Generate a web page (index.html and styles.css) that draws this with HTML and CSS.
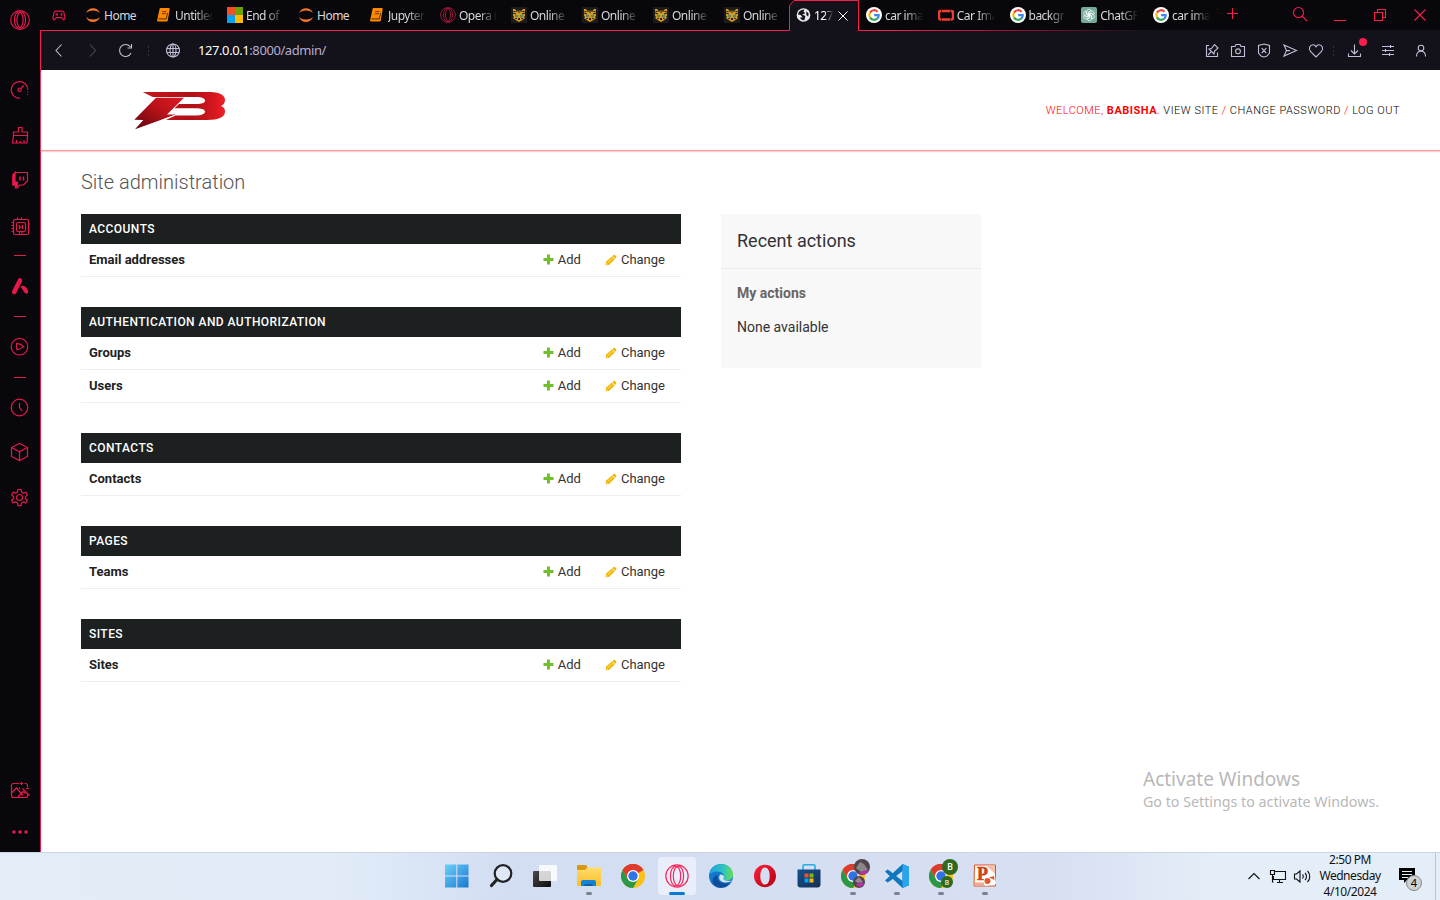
FILE: index.html
```html
<!DOCTYPE html>
<html lang="en">
<head>
<meta charset="utf-8">
<title>Site administration</title>
<link rel="stylesheet" href="styles.css">
</head>
<body>
<svg class="defs" aria-hidden="true">
  <defs>
    <linearGradient id="g-win" x1="0" y1="0" x2="1" y2="1"><stop offset="0" stop-color="#6bd0fb"/><stop offset="1" stop-color="#1b78cf"/></linearGradient>
    <linearGradient id="g-folder" x1="0" y1="0" x2="0" y2="1"><stop offset="0" stop-color="#ffdc6a"/><stop offset="1" stop-color="#f9bf28"/></linearGradient>
    <linearGradient id="g-edge" x1="0" y1="0" x2="1" y2="0"><stop offset="0" stop-color="#1fa0dd"/><stop offset=".6" stop-color="#2fc4c0"/><stop offset="1" stop-color="#6ae04a"/></linearGradient>
    <linearGradient id="g-opera" x1="0" y1="0" x2="1" y2="1"><stop offset="0" stop-color="#ff2038"/><stop offset="1" stop-color="#b00014"/></linearGradient>
    <linearGradient id="g-store" x1="0" y1="0" x2="1" y2="1"><stop offset="0" stop-color="#14508f"/><stop offset="1" stop-color="#182f54"/></linearGradient>
    <linearGradient id="g-task" x1="0" y1="0" x2="1" y2="1"><stop offset="0" stop-color="#4a4a4a"/><stop offset="1" stop-color="#0c0c0c"/></linearGradient>
    <linearGradient id="g-bolt" x1="1" y1="0" x2="0" y2="1"><stop offset="0" stop-color="#e01a23"/><stop offset=".45" stop-color="#b81219"/><stop offset="1" stop-color="#5d050b"/></linearGradient>
    <linearGradient id="g-b" x1="0" y1="0" x2="1" y2="0"><stop offset="0" stop-color="#c9151d"/><stop offset=".6" stop-color="#b01017"/><stop offset=".85" stop-color="#d3161e"/><stop offset="1" stop-color="#f01e27"/></linearGradient>
  </defs>
  <symbol id="jupyter" viewBox="0 0 16 16"><path d="M1 6.200C2.400 2.900 4.900 1.200 8 1.200s5.600 1.700 7 5C13.200 4.500 10.900 3.600 8 3.600S2.800 4.500 1 6.200zM1 9.900c1.800 1.700 4.100 2.500 7 2.500s5.200-.8 7-2.500c-1.400 3.300-3.900 5-7 5s-5.600-1.700-7-5z" fill="#f37726"/></symbol>
  <symbol id="book" viewBox="0 0 16 16"><path d="M4.500 2h8.300L10.800 13.500H2z" fill="#ff8800" stroke="#ff8800" stroke-width="1.800" stroke-linejoin="round"/><path d="M2.500 11.900h7.800l1.300-6" stroke="#2b1600" stroke-width=".8" fill="none"/><path d="M6.200 4.600h4.200M5.800 6.700h4.200" stroke="#5e3000" stroke-width=".9" fill="none"/></symbol>
  <symbol id="ms" viewBox="0 0 16 16"><path d="M0 0h8v8H0z" fill="#f25022"/><path d="M8 0h8v8H8z" fill="#6aa300"/><path d="M0 8h8v8H0z" fill="#00a4ef"/><path d="M8 8h8v8H8z" fill="#ffb900"/></symbol>
  <symbol id="gx" viewBox="0 0 20 20"><g fill="none" stroke="currentColor"><circle cx="10" cy="10" r="9.300"/><ellipse cx="8.800" cy="10" rx="4.300" ry="8.200"/><ellipse cx="11.200" cy="10" rx="4.300" ry="8.200"/></g></symbol>
  <symbol id="tiger" viewBox="0 0 16 16"><path d="M0 0h16v16H0z" fill="#1b1c19"/><path d="M2 2h2l1 1.500h6L12 2h2v6.500l-1 1.500 1 1-2.500 2L8 15l-3.500-2L2 11l1-1-1-1.500z" fill="#d59a22"/><path d="M6 1v4M8 1v5M10 1v4M2 6l3 1M14 6l-3 1M4 12l2-1M12 12l-2-1M2.500 4.500h2M13.500 4.500h-2" stroke="#1b1c19"/><path d="M4 8h3v2H4zM9 8h3v2H9z" fill="#4b8a88"/><path d="M7 11h2v2H7z" fill="#40200c"/></symbol>
  <symbol id="world" viewBox="0 0 16 16"><circle cx="8" cy="8" r="7.300" fill="#e9eaed"/><path d="M2.600 5.500C4 3 7 2 9 2.200L8 4.500l2 1.500-3.500 1.500 3.500 1.600-1 4.400c-2.500.2-4-1-4.800-2.500L7 10.500 5 8 2.200 7.500zM11 4l2.500 2.500-.5 3-2-1.500z" fill="#15131b"/></symbol>
  <symbol id="google" viewBox="0 0 16 16"><circle cx="8" cy="8" r="8" fill="#fff"/><g fill="none" stroke-width="2.200"><path d="M11.500 4.700A4.700 4.700 0 0 0 4 5.600" stroke="#ea4335"/><path d="M4 5.600a4.700 4.700 0 0 0 0 4.800" stroke="#fbbc05"/><path d="M4 10.400a4.700 4.700 0 0 0 7.200 1.200" stroke="#34a853"/><path d="M11.200 11.600A4.700 4.700 0 0 0 12.700 8.200H8.100" stroke="#4285f4"/></g></symbol>
  <symbol id="carimg" viewBox="0 0 16 16"><rect x="1" y="4" width="14" height="8.500" rx="1.500" fill="none" stroke="#ef3e2e" stroke-width="2.400"/><path d="M3.500 3v2.500M12.500 3v2.500M3.500 11.500V14M12.500 11.500V14" fill="none" stroke="#6d1712" stroke-width="1"/></symbol>
  <symbol id="gpt" viewBox="0 0 16 16"><rect width="16" height="16" rx="2" fill="#74aa9c"/><g fill="none" stroke="#fff" stroke-width=".7"><path id="petal" d="M8 8.900L5.600 7.500V4.600a2.300 2.300 0 0 1 4.400-.9L7.200 5.300v3"/><use href="#petal" transform="rotate(60 8 8)"/><use href="#petal" transform="rotate(120 8 8)"/><use href="#petal" transform="rotate(180 8 8)"/><use href="#petal" transform="rotate(240 8 8)"/><use href="#petal" transform="rotate(300 8 8)"/></g></symbol>
  <symbol id="plus" viewBox="0 0 11 11"><path d="M4 .5h3V4h3.500v3H7v3.500H4V7H.5V4H4z" fill="#70bf2b"/></symbol>
  <symbol id="pencil" viewBox="0 0 12 12"><path d="M.6 11.200L1.200 7.600l5.600-5.100 2.800 3L4 10.900z" fill="#efb80b"/><path d="M7.300 2.200L8.600 1c.5-.4 1-.4 1.400 0l1.200 1.200c.4.400.4.900 0 1.300L10 4.900z" fill="#efb80b"/><path d="M2.900 8.500L7.400 4.300" stroke="#fff3b8" stroke-width=".6"/><path d="M2 9.200l1 1-1.300.4z" fill="#fff"/></symbol>
  <symbol id="chrome" viewBox="0 0 24 24"><circle cx="12" cy="12" r="12" fill="#fbc116"/><path d="M12 12L1.600 6A12 12 0 0 1 22.400 6z" fill="#dd3b2e"/><path d="M12 6h10.400A12 12 0 0 0 1.600 6l5.200 9z" fill="#dd3b2e"/><path d="M17.200 15L12 24A12 12 0 0 1 1.600 6l5.200 9 5.200 3z" fill="#2a9847"/><circle cx="12" cy="12" r="6" fill="#fff"/><circle cx="12" cy="12" r="4.700" fill="#2f73e8"/></symbol>
</svg>

<div class="screen">
  <div class="browser">
    <nav class="rail">
      <svg class="ri" viewBox="0 0 20 20"><use href="#gx"/></svg>
      <svg class="ri m50" viewBox="0 0 20 20"><path d="M17.800 9.500a8.300 8.300 0 1 0-7.800 8.700"/><path d="M17.800 11.500v1M17.500 14v.8" /><circle cx="9.500" cy="9.800" r="1.600"/><path d="M10.700 8.600l3-3.100"/></svg>
      <svg class="ri m25" viewBox="0 0 20 20"><path d="M3.500 10.500V7h5V2.500h3.500V7h5.500v3.500zM3.500 10.500l-1 7.500h14.500l.5-7.500M6.500 18v-3M10.500 18v-2M14 18v-3"/></svg>
      <svg class="ri m25" viewBox="0 0 20 20"><path d="M5 2.500h12.500v8.500l-4 4h-3.500l-3 3v-3H3V5z"/><path d="M3 5l2-2.500V12h2.500v3l-2 2.500V15H3z" fill="currentColor"/><path d="M10 6.500v4M13.500 6.500v4" stroke-width="1.500"/></svg>
      <svg class="ri m26" viewBox="0 0 20 20"><rect x="3.500" y="3.500" width="15" height="15" rx="1.500"/><rect x="6.500" y="6.500" width="9" height="9" rx="1.500"/><path d="M9.500 9v4M12.500 9v4M9.500 11h3M7.500 3.500v-2M11.500 3.500v-2M9.500 16v2.500M12 16v2.500M1.500 6.500h2M1.500 9.500h2M1.500 12.500h2M1.500 15.500h2M18.500 8h1.500M18.500 14h1.500"/></svg>
      <i class="dash m19"></i>
      <svg class="ri m21" viewBox="0 0 20 20"><path d="M10 3.500L4.200 15" stroke-width="4.600" stroke-linecap="round"/><path d="M12.300 8.800c4 .4 6.200 4 5.800 6.700-.2 1.200-1.800 1.500-2.900.8-1.700-1.300-2.300-3.900-4.200-5.700-.8-.9 0-2 1.300-1.800z" fill="currentColor" stroke="none"/></svg>
      <i class="dash m19"></i>
      <svg class="ri m20" viewBox="0 0 20 20"><circle cx="9.500" cy="9.700" r="8.300"/><path d="M6.700 6.400c3 .3 5.300 1.300 7.100 3.200-2 1.800-4.200 2.700-6.800 3.100-.7-2-.8-4.200-.3-6.300z"/></svg>
      <i class="dash m20"></i>
      <svg class="ri m20" viewBox="0 0 20 20"><circle cx="9.500" cy="9.500" r="8.300"/><path d="M9.500 5v4.500l2.700 3.500"/></svg>
      <svg class="ri m24" viewBox="0 0 20 20"><path d="M9.500 1.500l8 4v9l-8 4-8-4v-9zM1.500 5.500l8 4.300 8-4.300M9.500 9.800v8.700"/></svg>
      <svg class="ri m25" viewBox="0 0 20 20"><circle cx="9.500" cy="10.500" r="3"/><path d="M8 2.500h3l.6 2.600 1.700 1 2.500-.9 1.600 2.700-2 1.800v1.700l2 1.800-1.600 2.700-2.500-.9-1.700 1-.6 2.600H8L7.400 16l-1.700-1-2.500.9-1.600-2.700 2-1.800V9.700l-2-1.800 1.600-2.700 2.500.9 1.700-1z"/></svg>
      <svg class="ri mauto" viewBox="0 0 20 20"><path d="M9 3.500H3.500a2 2 0 0 0-2 2v10a2 2 0 0 0 2 2h12a2 2 0 0 0 2-2v-1M17.500 7.500V5.500a2 2 0 0 0-2-2H14.500M1.500 13l5-5 6.500 7.500M8 17l5-5.500 2.500 2M12.500 8.500l7 7M11.500 2v3M10 3.500h3M16 8.500h3M9.500 7.500v1.500"/></svg>
      <svg class="ri m22" viewBox="0 0 20 20"><g fill="currentColor" stroke="none"><circle cx="4" cy="10" r="1.800"/><circle cx="10" cy="10" r="1.800"/><circle cx="16" cy="10" r="1.800"/></g></svg>
    </nav>
    <div class="window">
      <div class="tabs">
        <svg class="pad" viewBox="0 0 16 12"><path d="M4 1h8l1.500 1L15 9.500 13.500 11 11 8.500H5L2.500 11 1 9.500 2.500 2z"/><path d="M4 4.800h3M5.500 3.300v3M10 3.500l1.800 2.500M11.800 3.500L10 6"/></svg>
        <div class="tab"><svg><use href="#jupyter"/></svg><span>Home</span></div>
        <div class="tab"><svg><use href="#book"/></svg><span class="fade">Untitlec</span></div>
        <div class="tab"><svg><use href="#ms"/></svg><span class="fade">End of</span></div>
        <div class="tab"><svg><use href="#jupyter"/></svg><span>Home</span></div>
        <div class="tab"><svg><use href="#book"/></svg><span class="fade">Jupyter</span></div>
        <div class="tab"><svg class="rose"><use href="#gx"/></svg><span class="fade">Opera (</span></div>
        <div class="tab"><svg><use href="#tiger"/></svg><span class="fade">Online</span></div>
        <div class="tab"><svg><use href="#tiger"/></svg><span class="fade">Online</span></div>
        <div class="tab"><svg><use href="#tiger"/></svg><span class="fade">Online</span></div>
        <div class="tab"><svg><use href="#tiger"/></svg><span class="fade">Online</span></div>
        <div class="tab active">
          <svg class="shape" viewBox="0 0 72 32"><path d="M0 30.500h1.500V5.500L6 .5h64.500v30H72V32H0z" fill="#13111a" stroke="none"/><path d="M0 30.500h1.500V5.500L6 .5h64.500v30H72"/></svg>
          <svg class="fav"><use href="#world"/></svg><span class="fade">127</span>
          <svg class="close" viewBox="0 0 10 10"><path d="M.5.5l9 9M9.500.5l-9 9"/></svg>
        </div>
        <div class="tab late"><svg><use href="#google"/></svg><span class="fade">car ima</span></div>
        <div class="tab late"><svg><use href="#carimg"/></svg><span class="fade">Car Ima</span></div>
        <div class="tab late"><svg><use href="#google"/></svg><span class="fade">backgr</span></div>
        <div class="tab late"><svg><use href="#gpt"/></svg><span class="fade">ChatGP</span></div>
        <div class="tab late"><svg><use href="#google"/></svg><span class="fade">car ima</span></div>
        <svg class="new" viewBox="0 0 12 12"><path d="M5.500 0v11M0 5.500h11"/></svg>
        <div class="winctl">
          <svg viewBox="0 0 16 16"><circle cx="6.500" cy="5.500" r="5"/><path d="M10 9l5 5"/></svg>
          <svg viewBox="0 0 16 16"><path d="M2 13.500h12"/></svg>
          <svg viewBox="0 0 16 16"><path d="M2.500 5.500h8v8h-8zM5.500 5V2.500h8v8H11"/></svg>
          <svg viewBox="0 0 16 16"><path d="M2.500 2.500l11 11M13.500 2.500l-11 11"/></svg>
        </div>
      </div>
      <div class="bar">
        <svg class="b1" viewBox="0 0 16 16"><path d="M10.500 1.500L5 7.500l5.500 6"/></svg>
        <svg class="b2 dim" viewBox="0 0 16 16"><path d="M5 1.500l5.500 6-5.500 6"/></svg>
        <svg class="b3" viewBox="0 0 16 16"><path d="M13 10A6 6 0 1 1 12.500 4M13.500 1v4h-4"/></svg>
        <i class="dots"></i>
        <svg class="b4" viewBox="0 0 16 16"><circle cx="8" cy="7.500" r="6.500"/><ellipse cx="8" cy="7.500" rx="3" ry="6.500"/><path d="M2 5.500h12M2 9.500h12M8 1v13"/></svg>
        <span class="url"><b>127.0.0.1</b>:8000/admin/</span>
        <div class="tools">
          <svg viewBox="0 0 16 16"><path d="M5 2.500H2.500v11h11V9.500M4 12l3.300-3.300M5 6l5 5 .5-2.700 3.500-3.300-3.500-3.500L7.500 5.500z"/></svg>
          <svg viewBox="0 0 16 16"><path d="M1.500 3.500H5L6 1.500h4l1 2h3.500v10h-13z"/><circle cx="8" cy="8.300" r="2.400"/></svg>
          <svg viewBox="0 0 16 16"><path d="M8 1l5.500 1.500V10L11 13l-3 1-3-1-2.500-3V2.500zM5.700 5.200l4.600 4.800M10.300 5.200l-4.600 4.800"/></svg>
          <svg viewBox="0 0 16 16"><path d="M2 2l12.500 5.600L2 13.100l2.500-5.500zM4.500 7.600H8"/></svg>
          <svg viewBox="0 0 16 16"><path d="M8 14L2.500 8.500C0 5.500 2 1.700 5 1.700c1.500 0 2.500 1 3 2 .5-1 1.500-2 3-2 3 0 5 3.800 2.500 6.800z"/></svg>
          <i class="dots"></i>
          <svg class="dl" viewBox="0 0 16 16"><path d="M8.500 1.500v9M5 7.500L8.500 11 12 7.500M2.500 10.500v3h12v-3"/></svg>
          <svg class="sl" viewBox="0 0 16 16"><path d="M2 3.500h12M2 7.500h12M2 11.500h12M10.500 2v3M5.500 6v3M9.500 10v3"/></svg>
          <svg class="us" viewBox="0 0 16 16"><circle cx="8" cy="5" r="2.800"/><path d="M3.500 13.500c0-3.500 1.700-5.200 4.500-5.200s4.500 1.700 4.500 5.200"/></svg>
          <i class="alert"></i>
        </div>
      </div>
      <div class="page">
        <header class="head">
          <svg class="logo" viewBox="0 0 94 40">
            <path fill-rule="evenodd" d="M9.700 2H77C88 2 92 6 92 10c0 3-1.500 5-4 6 3 1 4 3 4 5.500C92 27 86 30 74 30H33l9-4.500h20c6 0 10-1.500 10-3.800s-4-3.400-9-3.400H41.500L46 14h17.500c5 0 8.500-1.200 8.500-3.300S69 7 63 7H19.700z" fill="url(#g-b)"/>
            <path d="M23 7.700h28L36 22.500 34 24.500h9L2 39.300 10.300 30l-9-.3z" fill="url(#g-bolt)"/>
            <path d="M42 25.200L25 31.800" stroke="#fff" stroke-width=".9"/>
          </svg>
          <div class="user">WELCOME, <b>BABISHA</b>. <a>VIEW SITE</a> / <a>CHANGE PASSWORD</a> / <a>LOG OUT</a></div>
        </header>
        <main>
          <h1>Site administration</h1>
          <div class="cols">
            <div class="modules">
              <section><h2>ACCOUNTS</h2>
                <div class="row"><b>Email addresses</b><a><svg class="pl"><use href="#plus"/></svg>Add</a><a class="ch"><svg class="pe"><use href="#pencil"/></svg>Change</a></div></section>
              <section><h2>AUTHENTICATION AND AUTHORIZATION</h2>
                <div class="row"><b>Groups</b><a><svg class="pl"><use href="#plus"/></svg>Add</a><a class="ch"><svg class="pe"><use href="#pencil"/></svg>Change</a></div>
                <div class="row"><b>Users</b><a><svg class="pl"><use href="#plus"/></svg>Add</a><a class="ch"><svg class="pe"><use href="#pencil"/></svg>Change</a></div></section>
              <section><h2>CONTACTS</h2>
                <div class="row"><b>Contacts</b><a><svg class="pl"><use href="#plus"/></svg>Add</a><a class="ch"><svg class="pe"><use href="#pencil"/></svg>Change</a></div></section>
              <section><h2>PAGES</h2>
                <div class="row"><b>Teams</b><a><svg class="pl"><use href="#plus"/></svg>Add</a><a class="ch"><svg class="pe"><use href="#pencil"/></svg>Change</a></div></section>
              <section><h2>SITES</h2>
                <div class="row"><b>Sites</b><a><svg class="pl"><use href="#plus"/></svg>Add</a><a class="ch"><svg class="pe"><use href="#pencil"/></svg>Change</a></div></section>
            </div>
            <aside class="recent">
              <h2>Recent actions</h2>
              <h3>My actions</h3>
              <p>None available</p>
            </aside>
          </div>
        </main>
        <div class="activate"><div class="a1">Activate Windows</div><div class="a2">Go to Settings to activate Windows.</div></div>
      </div>
    </div>
  </div>
  <footer class="taskbar">
    <div class="apps">
      <div class="app"><svg viewBox="0 0 24 24"><path d="M0 .5h11.300v11H0zM12.300.5h11.200v11H12.300zM0 12.500h11.300v11H0zM12.300 12.500h11.200v11H12.300z" fill="url(#g-win)"/></svg></div>
      <div class="app"><svg viewBox="0 0 24 24"><circle cx="14" cy="9.500" r="8.300" fill="#e8eefa" fill-opacity=".6" stroke="#222" stroke-width="2.200"/><path d="M8 15.500l-5.500 6" stroke="#222" stroke-width="3.200" stroke-linecap="round"/></svg></div>
      <div class="app"><svg viewBox="0 0 24 24"><rect y="7" width="18" height="16" rx="1" fill="url(#g-task)"/><rect x="6" y="1" width="18" height="16" rx="1" fill="#fff" fill-opacity=".8"/></svg></div>
      <div class="app run"><svg viewBox="0 0 24 24"><path d="M0 2a1 1 0 0 1 1-1h8l2 3-2 3H0z" fill="#d9980e"/><path d="M0 6h8l2.500-2.500H23a1 1 0 0 1 1 1V21a1 1 0 0 1-1 1H1a1 1 0 0 1-1-1z" fill="url(#g-folder)"/><path d="M4 22v-4a2 2 0 0 1 2-2h11a2 2 0 0 1 2 2v4z" fill="#1583d3"/><path d="M7.500 22v-2h8v2z" fill="#0b5fa5"/></svg></div>
      <div class="app"><svg><use href="#chrome"/></svg></div>
      <div class="app current"><svg class="gxb"><use href="#gx"/></svg></div>
      <div class="app"><svg viewBox="0 0 24 24"><circle cx="12" cy="12" r="12" fill="#1478cd"/><path d="M.5 10C1.500 4 6.500 0 12 0c7 0 12 5 12 10.500 0 4-3 6-6.500 6-2.500 0-3.500-1-3-2 1-1 1-5-3-6.500C7 6.500 2 8 .5 11z" fill="url(#g-edge)"/><path d="M8.500 11c-1.500 5.500 3.500 10.500 13 7.500-4 6-12 6.500-16.500 2.500-3-4-1-9 3.500-10z" fill="#104c98"/><path d="M11.500 10.500c-3 2.500-1 8 5 8 3 0 5-.7 6.500-2-4 1-9 0-8.500-2 1.500-2-.5-4-3-4z" fill="#d7e3f5"/></svg></div>
      <div class="app"><svg viewBox="0 0 24 24"><path fill-rule="evenodd" d="M12 .8c6 0 11 4.800 11 11.200s-5 11.200-11 11.200S1 18.400 1 12 6 .8 12 .8zm0 2.700C9 3.500 7.300 7 7.300 12S9 20.500 12 20.500s4.700-3.500 4.700-8.500S15 3.500 12 3.500z" fill="url(#g-opera)"/></svg></div>
      <div class="app"><svg viewBox="0 0 24 24"><path d="M6 7V2c0-.7.500-1.200 1.200-1.200h9.600c.7 0 1.200.5 1.200 1.200V7" fill="none" stroke="#25aee6" stroke-width="1.600"/><path d="M.5 5.500h23v15a3 3 0 0 1-3 3h-17a3 3 0 0 1-3-3z" fill="url(#g-store)"/><path d="M7.500 9.500h4v4h-4z" fill="#f25022"/><path d="M12.500 9.500h4v4h-4z" fill="#7fba00"/><path d="M7.500 14.500h4v4h-4z" fill="#00a4ef"/><path d="M12.500 14.500h4v4h-4z" fill="#ffb900"/></svg></div>
      <div class="app run"><svg viewBox="0 0 24 24"><use href="#chrome" width="24" height="24"/></svg><svg class="av" viewBox="0 0 30 30"><circle cx="21" cy="8" r="8" fill="#4e464b"/><path d="M15 9l4-6 4 2 4 6-7 2z" fill="#8d8688"/><path d="M17 14l8-3 2 2-4 3z" fill="#b531ae"/><circle cx="18" cy="23" r="6" fill="#4e464b"/><path d="M14 22l4-4 4 5-5 1z" fill="#99898f"/><path d="M14 26l7-3 2 2-3 3z" fill="#b531ae"/></svg></div>
      <div class="app run"><svg viewBox="0 0 24 24"><path d="M17.500 0L24 2.800v18.400L17.500 24 2 9.500 0 7.500 2.500 5.500 5 7l12.500 10V7L5 17l-2.500 1.500L0 16.500 17.500 0z" fill="#1177bd"/><path d="M17.500 0L24 2.800v18.400L17.500 24z" fill="#29a5ee"/></svg></div>
      <div class="app run"><svg viewBox="0 0 24 24"><use href="#chrome" width="24" height="24"/></svg><svg class="av" viewBox="0 0 30 30"><circle cx="21" cy="8" r="8" fill="#30691d"/><circle cx="18" cy="23" r="6" fill="#30691d"/><text x="21" y="11" class="t1">B</text><text x="18" y="25.500" class="t2">B</text></svg></div>
      <div class="app run"><svg class="ppt" viewBox="0 0 24 24"><path d="M1.500 1h21v21H1z" fill="#fff" stroke="#d9542c"/><path d="M13 1.500h9V10z" fill="#f6c2a8"/><path d="M2 18.500h9v3H2z" fill="#f0a98a"/><text x="9.500" y="16" class="pp">P</text><path d="M11 13l11-2 1 9-11 2z" fill="#fff"/><circle cx="14.500" cy="17" r="3" fill="#e25a2c"/><path d="M16 13.500l5-1.500.5 4z" fill="#e25a2c"/></svg></div>
    </div>
    <div class="tray">
      <svg class="caret" viewBox="0 0 14 14"><path d="M1.500 9L7 3.500 12.500 9"/></svg>
      <svg class="net" viewBox="0 0 16 14"><path d="M5 1.500h10.500v8H3.500V6M7 12.500h6M9.500 9.500v3M.5.500h4v4h-4zM2.500 4.500V12h1"/></svg>
      <svg class="vol" viewBox="0 0 18 14"><path d="M1.500 4h2L7 1v11L3.500 9h-2zM9.500 4.500c1 1 1 3 0 4M12 3c2 2 2 5 0 7M14.500 1c3 3 3 8 0 11"/></svg>
      <div class="clock">2:50 PM<br>Wednesday<br>4/10/2024</div>
      <div class="note"><svg viewBox="0 0 17 17"><path d="M0 0h16v12H8l-3 3V12H0z" fill="#000"/><path d="M3 3.500h10M3 6.500h10M3 9.500h6" stroke="#e4eef8"/></svg><span>4</span></div>
      <i class="peek"></i>
    </div>
  </footer>
</div>
</body>
</html>
```

FILE: styles.css
```css
* { box-sizing: border-box; }
body { margin: 0; font-family: Roboto, "Liberation Sans", sans-serif; overflow: hidden; }
h1, h2, h3, p { margin: 0; }
svg { flex: none; display: block; overflow: visible; }
i { display: block; }
.defs { position: absolute; width: 0; height: 0; }
.screen { width: 1440px; height: 900px; display: flex; flex-direction: column; }
.browser { height: 852px; display: flex; background: #08070c; }

/* left rail */
.rail { width: 40px; display: flex; flex-direction: column; align-items: center; padding: 10px 0; color: #e6194b; }
.ri { width: 20px; height: 20px; fill: none; stroke: currentColor; stroke-width: 1.2; }
.dash { width: 12px; height: 1px; background: #e6194b; }
.m19 { margin-top: 19px; } .m20 { margin-top: 20px; } .m21 { margin-top: 21px; } .m22 { margin-top: 22px; }
.m24 { margin-top: 24px; } .m25 { margin-top: 25px; } .m26 { margin-top: 26px; } .m50 { margin-top: 50px; }
.mauto { margin-top: auto; }

.window { width: 1400px; display: flex; flex-direction: column; }

/* tab strip */
.tabs { height: 31px; flex: none; display: flex; align-items: flex-start; padding-left: 12px; color: #d8d8da;
  font: 12px/16px "Noto Sans", sans-serif;
  background: linear-gradient(90deg, #fa1e4e 0 850px, #a91438 960px, #13111a 1110px) 0 100% / 100% 1px no-repeat; }
.pad { width: 14px; height: 11px; margin: 10px 19px 0 0; fill: none; stroke: #e6194b; stroke-width: 1.3; }
.tab { position: relative; width: 71px; flex: none; display: flex; gap: 3px; padding-top: 7px; white-space: nowrap; }
.tab.late { width: 71.750px; }
.tab > svg { width: 16px; height: 16px; }
.tab span { position: relative; width: 39px; padding-top: 1px; font-size: 12px; letter-spacing: -.5px; }
.tab .fade { -webkit-mask-image: linear-gradient(90deg, #000 50%, transparent 98%); mask-image: linear-gradient(90deg, #000 50%, transparent 98%); }
.rose { color: #c01a42; }
.tab.active { width: 71px; padding-left: 1px; }
.tab .shape { position: absolute; left: -7px; top: 0; width: 72px; height: 32px; fill: none; stroke: #fa1e4e; }
.tab .fav { position: relative; width: 15px; height: 16px; }
.tab.active span { width: 20px; color: #fff; }
.tab .close { position: relative; width: 10px; height: 10px; margin: 4px 0 0 1px; stroke: #fff; fill: none; }
.new { width: 12px; height: 12px; margin: 8px 0 0 2px; fill: none; stroke: #fa1e4e; }
.winctl { margin-left: auto; display: flex; gap: 24px; padding: 7px 12px 0 0; }
.winctl svg { width: 16px; height: 16px; fill: none; stroke: #fa1e4e; stroke-width: 1.1; }

/* address bar */
.bar { height: 39px; flex: none; display: flex; align-items: center; background: #13111a; border-left: 1px solid #fa1e4e; }
.bar svg { width: 16px; height: 16px; fill: none; stroke: #c4bdd8; stroke-width: 1.1; }
.bar .b1 { margin-left: 10px; }
.bar .b2 { margin-left: 18px; }
.bar .b3 { margin-left: 17px; }
.bar .b4 { margin-left: 16px; }
.bar .dim { stroke: #4a4756; }
.dots { width: 1px; height: 10px; margin-left: 14px; background: repeating-linear-gradient(#35313f 0 2px, transparent 2px 4px); }
.url { margin-left: 17px; padding-bottom: 1px; font: 13px/18px "Noto Sans", sans-serif; letter-spacing: -.42px; color: #b7aecf; }
.url b { color: #fff; font-weight: 400; }
.tools { position: relative; margin-left: auto; display: flex; align-items: center; gap: 10px; padding-right: 11px; }
.tools .dots { margin: 0 -2px 0 -1px; }
.tools .dl { margin-left: 4px; }
.tools .sl { margin-left: 8px; }
.tools .us { margin-left: 7px; }
.alert { position: absolute; right: 73px; top: -5px; width: 8px; height: 8px; border-radius: 50%; background: #fa1e4e; }

/* page */
.page { position: relative; flex: 1; background: #fff; border-left: 1px solid #e6194b; }
.head { height: 80px; display: flex; justify-content: space-between; align-items: center; padding: 0 40px 0 92px; box-shadow: 0 1px 0 #ff9c9c, 0 2px 1px #ffd0d0; }
.logo { width: 94px; height: 40px; }
.user { font-size: 11px; font-weight: 300; letter-spacing: .5px; color: #ff0000; }
.user b { font-weight: 700; }
.user a { color: #000; }
main { padding: 20px 40px; }
h1 { font-size: 20px; font-weight: 300; line-height: 24px; color: #555; margin-bottom: 20px; }
.cols { display: flex; gap: 40px; align-items: flex-start; }
.modules { width: 600px; display: flex; flex-direction: column; gap: 30px; }
.modules h2 { height: 30px; padding: 0 8px; background: #1c2021; color: #fff; font-size: 12px; line-height: 30px; font-weight: 500; letter-spacing: .44px; }
.row { height: 33px; display: flex; align-items: center; padding: 0 16px 2px 8px; border-bottom: 1px solid #eee; font-size: 13px; color: #333; }
.row b { flex: 1; color: #222; font-weight: 700; }
.row a { display: flex; align-items: center; gap: 4px; }
.row .ch { margin-left: 24px; }
.pl { width: 11px; height: 11px; }
.pe { width: 12px; height: 12px; margin-top: 1px; }
.recent { width: 260px; height: 154px; background: #f8f8f8; }
.recent h2 { height: 55px; padding: 16px; border-bottom: 1px solid #eaeaea; font-size: 18px; line-height: 22px; font-weight: 400; color: #333; }
.recent h3 { margin: 16px 16px 0; font-size: 14px; line-height: 17px; color: #666; }
.recent p { margin: 17px 16px 0; font-size: 14px; line-height: 17px; color: #333; }
.activate { position: absolute; left: 1102px; top: 696px; color: #b8b8b8; font-family: "Noto Sans", sans-serif; white-space: nowrap; }
.a1 { font-size: 19px; line-height: 26px; }
.a2 { font-size: 14.250px; line-height: 20px; }

/* taskbar */
.taskbar { height: 48px; display: flex; justify-content: space-between; border-top: 1px solid #cbd5e6; padding-left: 435px;
  background: linear-gradient(90deg, #e2edf8 0, #e2ecf8 330px, #d3def3 500px, #d7dff1 1050px, #e4eef8 1220px); }
.apps { display: flex; }
.app { position: relative; width: 44px; display: flex; justify-content: center; padding-top: 11px; }
.app > svg { position: relative; width: 24px; height: 24px; }
.app.run::after { content: ""; position: absolute; left: 19px; top: 39px; width: 6px; height: 3px; border-radius: 2px; background: #7c818b; }
.app.current::before { content: ""; position: absolute; inset: 4px 3px 5px; border-radius: 4px; background: #eaeefa; }
.app.current::after { content: ""; position: absolute; left: 14px; top: 39px; width: 16px; height: 3px; border-radius: 2px; background: #0b78d4; }
.gxb { color: #f5275b; }
.app > .av { position: absolute; left: 10px; top: 6px; width: 30px; height: 30px; }
.av text { fill: #fff; font-family: Roboto, sans-serif; text-anchor: middle; }
.t1 { font-size: 9px; font-weight: 500; }
.t2 { font-size: 7px; }
.pp { font: 700 18px "Liberation Serif", serif; fill: #cf4516; stroke: #cf4516; stroke-width: .6; text-anchor: middle; }
.tray { display: flex; align-items: center; }
.tray > svg { fill: none; stroke: #111; height: 14px; stroke-width: 1.1; }
.caret { width: 14px; }
.net { width: 16px; margin-left: 9px; }
.vol { width: 18px; margin-left: 7px; }
.clock { width: 70px; margin: -2px 0 0 4px; text-align: center; color: #111; font: 12px/16px "Noto Sans", sans-serif; letter-spacing: -.45px; }
.note { position: relative; margin-left: 14px; width: 17px; }
.note svg { width: 17px; height: 17px; }
.note span { position: absolute; left: 7px; top: 7px; width: 16px; height: 16px; border: 1px solid #888; border-radius: 50%; background: #cdd0d4; font: 11px/14px "Noto Sans", sans-serif; text-align: center; color: #000; }
.peek { width: 1px; height: 48px; margin: 0 4px 0 19px; background: #b9c5d2; }
```
